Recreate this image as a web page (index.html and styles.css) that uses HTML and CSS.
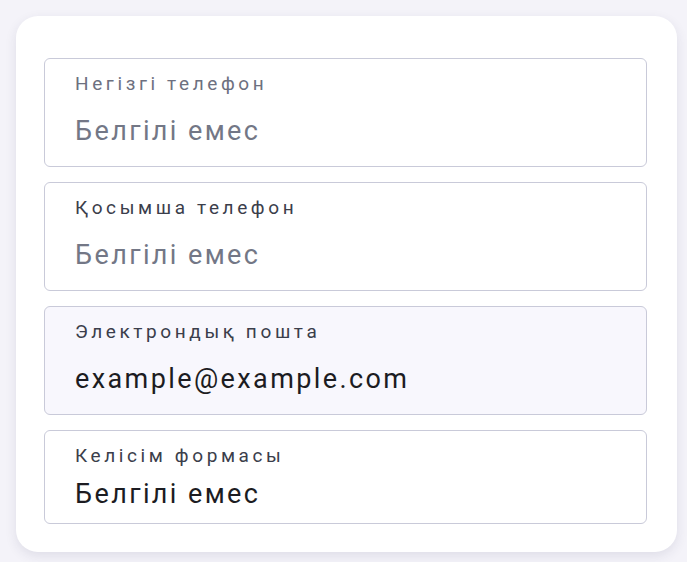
FILE: index.html
```html
<!DOCTYPE html>
<html lang="kk">
<head>
<meta charset="utf-8">
<link rel="stylesheet" href="styles.css">
</head>
<body>
<div class="card">
  <div class="field">
    <div class="label label-muted">Негізгі телефон</div>
    <div class="value value-muted">Белгілі емес</div>
  </div>
  <div class="field">
    <div class="label">Қосымша телефон</div>
    <div class="value value-muted">Белгілі емес</div>
  </div>
  <div class="field field-filled">
    <div class="label">Электрондық пошта</div>
    <div class="value">example@example.com</div>
  </div>
  <div class="field field-compact">
    <div class="label">Келісім формасы</div>
    <div class="value">Белгілі емес</div>
  </div>
</div>
</body>
</html>
```

FILE: styles.css
```css
html, body {
  margin: 0;
  padding: 0;
  background: #f4f3f9;
}
body {
  padding: 16px 10px 10px 16px;
  font-family: Roboto, "Noto Sans", sans-serif;
}
.card {
  width: 661px;
  height: 536px;
  box-sizing: border-box;
  background: #ffffff;
  border-radius: 22px;
  box-shadow: 0 4px 12px rgba(40, 40, 80, 0.10);
  padding: 42px 30px 28px 28px;
  display: flex;
  flex-direction: column;
  gap: 15px;
}
.field {
  border: 1px solid #c9cad9;
  border-radius: 6px;
  padding: 14px 30px 19px 30px;
  display: flex;
  flex-direction: column;
  gap: 20px;
  background: #ffffff;
}
.field-filled {
  background: #f8f7fd;
}
.field-compact {
  gap: 11px;
  padding-bottom: 13px;
}
.label {
  font-size: 19px;
  line-height: 22px;
  letter-spacing: 3.6px;
  color: #3b3e4b;
}
.label-muted {
  color: #6d7080;
}
.value {
  font-size: 27px;
  line-height: 32px;
  letter-spacing: 2.4px;
  color: #1c1c22;
}
.value-muted {
  color: #737786;
}
```
